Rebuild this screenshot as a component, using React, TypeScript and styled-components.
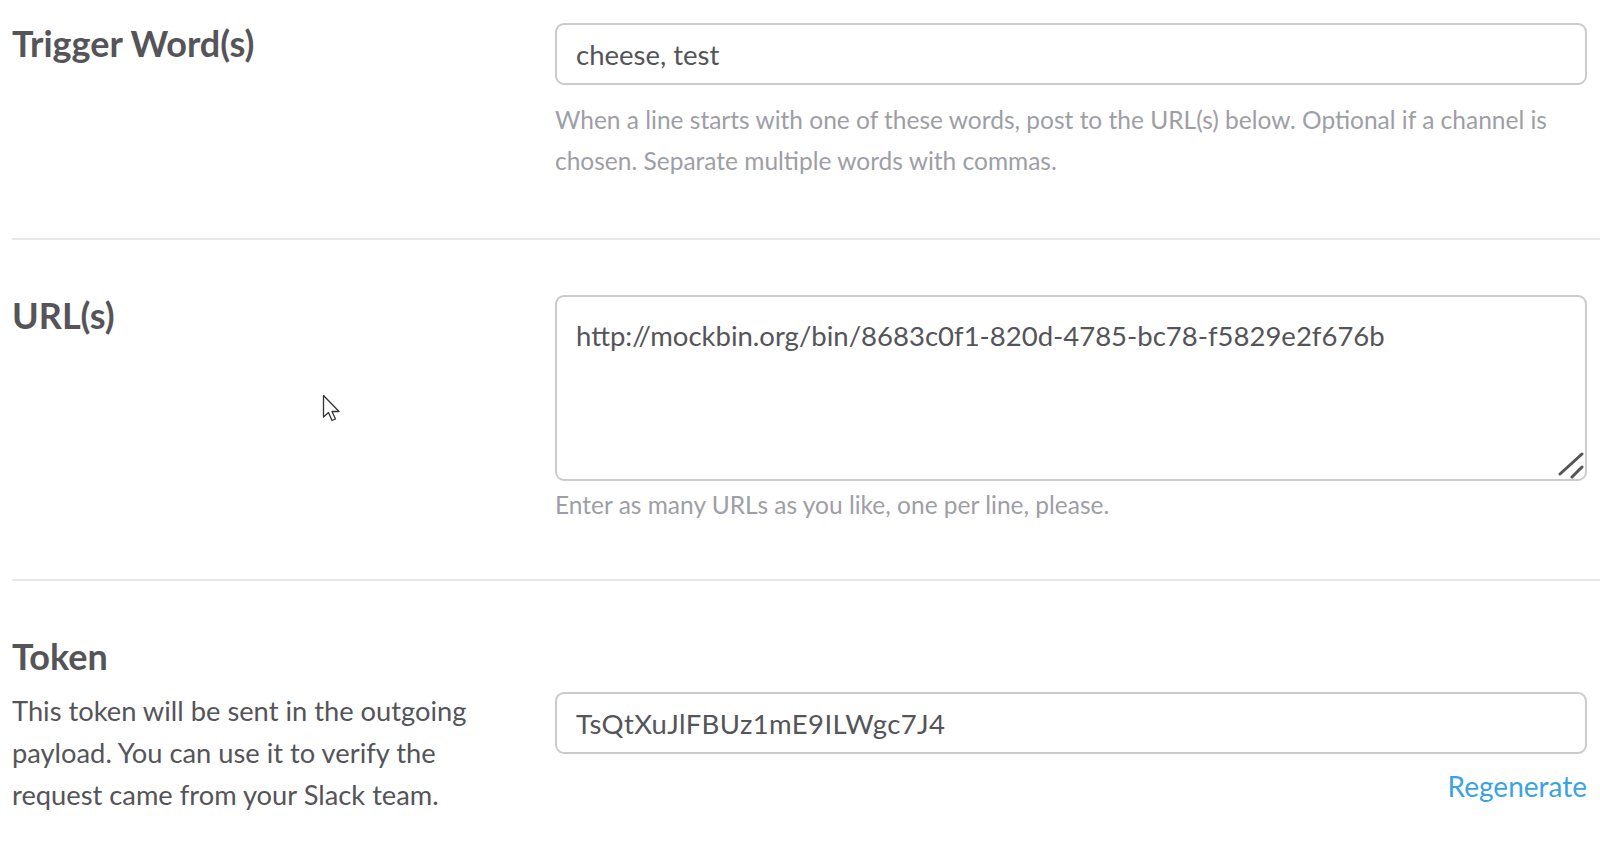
import styled, { createGlobalStyle } from 'styled-components'

const GlobalStyle = createGlobalStyle`
	html, body {
		margin: 0;
		background: #fff;
		font-family: Lato, 'Noto Sans', sans-serif;
		color: #555459;
		overflow: hidden;
	}
`

const Page = styled.div`
	position: relative;
	padding-left: 12px;
	height: 842px;
	overflow: hidden;
`

const Section = styled.section<{ $top: number; $bottom: number }>`
	display: grid;
	grid-template-columns: 543px 1fr;
	padding: ${(p) => p.$top}px 13px ${(p) => p.$bottom}px 0;
	border-bottom: 2px solid #e8e8e8;
`

const LabelColumn = styled.div`
	display: flex;
	flex-direction: column;
`

const Label = styled.h3`
	margin: -1px 0 0;
	font-size: 36px;
	line-height: 42px;
	font-weight: 700;
	color: #555459;
`

const Description = styled.p`
	margin: 13px 0 0;
	width: 480px;
	font-size: 27.3px;
	line-height: 42px;
	color: #555459;
`

const FieldColumn = styled.div<{ $offset?: number }>`
	display: flex;
	flex-direction: column;
	padding-top: ${(p) => p.$offset ?? 0}px;
`

const TextInput = styled.input<{ $spacing?: number }>`
	box-sizing: border-box;
	width: 100%;
	height: 62px;
	padding: 0 19px;
	border: 2px solid #cbcbcd;
	border-radius: 9px;
	font-family: inherit;
	font-size: 27.5px;
	letter-spacing: ${(p) => p.$spacing ?? 0}px;
	color: #555459;
	background: #fff;
	outline: none;
`

const AreaWrap = styled.div`
	position: relative;
`

const TextArea = styled.textarea`
	display: block;
	box-sizing: border-box;
	width: 100%;
	height: 186px;
	padding: 21px 19px;
	border: 2px solid #cbcbcd;
	border-radius: 9px;
	font-family: inherit;
	font-size: 27.5px;
	line-height: 36px;
	color: #555459;
	background: #fff;
	resize: none;
	outline: none;
`

const Grip = styled.svg`
	position: absolute;
	right: 2px;
	bottom: 2px;
	width: 28px;
	height: 28px;
`

const Hint = styled.p<{ $gap: number }>`
	margin: ${(p) => p.$gap}px 0 0;
	font-size: 24.5px;
	line-height: 41px;
	color: #9e9ea6;
`

const LinkRow = styled.div`
	display: flex;
	justify-content: flex-end;
	margin-top: 11px;
`

const Link = styled.a`
	font-size: 28px;
	line-height: 42px;
	color: #3aa3e3;
	text-decoration: none;
	cursor: pointer;
`

const Pointer = styled.svg`
	position: absolute;
	left: 322px;
	top: 394px;
	width: 22px;
	height: 30px;
`

export default function App() {
	return (
		<Page>
			<GlobalStyle />
			<Section $top={23} $bottom={57}>
				<LabelColumn>
					<Label>Trigger Word(s)</Label>
				</LabelColumn>
				<FieldColumn>
					<TextInput defaultValue='cheese, test' />
					<Hint $gap={14}>
						When a line starts with one of these words, post to the URL(s) below. Optional if a
						channel is chosen. Separate multiple words with commas.
					</Hint>
				</FieldColumn>
			</Section>

			<Section $top={55} $bottom={54}>
				<LabelColumn>
					<Label>URL(s)</Label>
				</LabelColumn>
				<FieldColumn>
					<AreaWrap>
						<TextArea defaultValue='http://mockbin.org/bin/8683c0f1-820d-4785-bc78-f5829e2f676b' />
						<Grip viewBox='0 0 28 28'>
							<path d='M3 23 L25 3 M15 26 L25 16' stroke='#555' strokeWidth='3' strokeLinecap='round' />
						</Grip>
					</AreaWrap>
					<Hint $gap={3}>Enter as many URLs as you like, one per line, please.</Hint>
				</FieldColumn>
			</Section>

			<Section $top={55} $bottom={54}>
				<LabelColumn>
					<Label>Token</Label>
					<Description>
						This token will be sent in the outgoing payload. You can use it to verify the request
						came from your Slack team.
					</Description>
				</LabelColumn>
				<FieldColumn $offset={56}>
					<TextInput defaultValue='TsQtXuJlFBUz1mE9ILWgc7J4' $spacing={0.4} />
					<LinkRow>
						<Link>Regenerate</Link>
					</LinkRow>
				</FieldColumn>
			</Section>

			<Pointer viewBox='0 0 22 30'>
				<path
					d='M1.5 1.5 L1.5 23 L6.5 18.5 L10 26.5 L13.5 25 L10 17.5 L17 17.5 Z'
					fill='#fff'
					stroke='#333'
					strokeWidth='1.3'
					strokeLinejoin='round'
				/>
			</Pointer>
		</Page>
	)
}
